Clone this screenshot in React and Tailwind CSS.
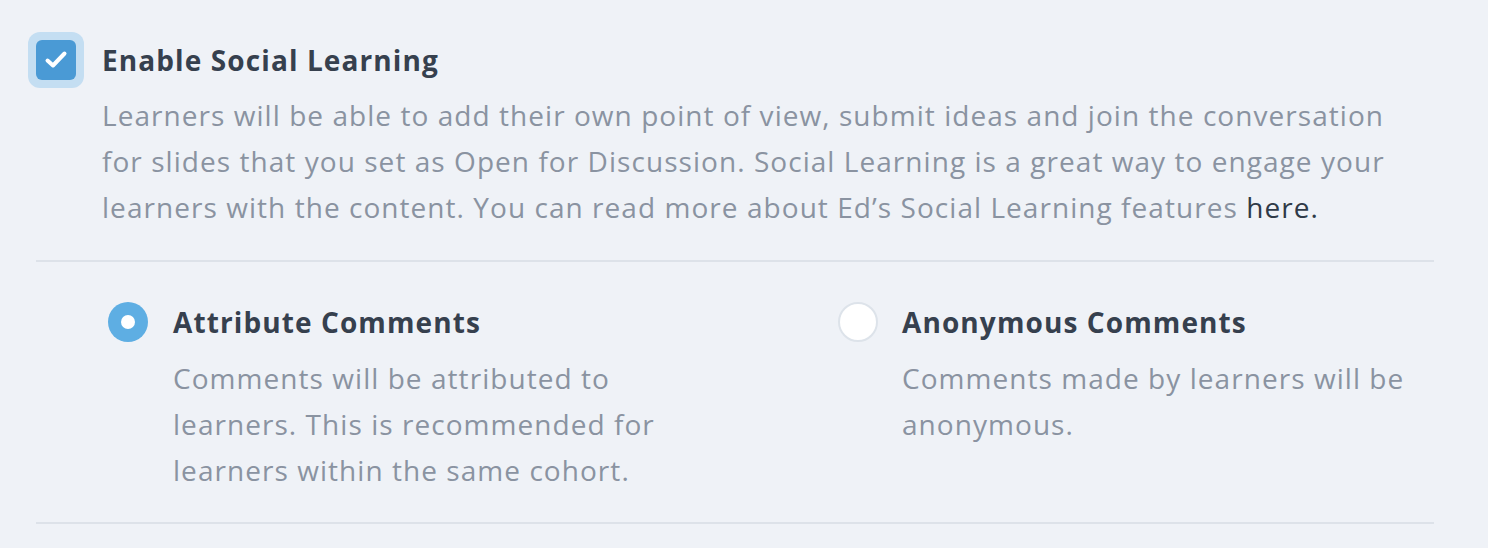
export default function App() {
  const font = { fontFamily: "'Open Sans', Lato, sans-serif" };
  return (
    <div className="w-[1488px] h-[548px] bg-[#eff2f7] overflow-hidden" style={font}>
      <div className="flex pt-[32px] pl-[28px]">
        <div className="w-[56px] h-[56px] rounded-[12px] bg-[#c4def2] flex items-center justify-center shrink-0">
          <div className="w-[40px] h-[40px] rounded-[6px] bg-[#4a9ad5] flex items-center justify-center">
            <svg width="24" height="20" viewBox="0 0 24 20" fill="none" className="shrink-0">
              <path d="M3.5 10.5 L9 15.5 L20.5 3.5" stroke="white" strokeWidth="4" strokeLinecap="round" strokeLinejoin="round" />
            </svg>
          </div>
        </div>
        <div className="ml-[18px]">
          <div className="text-[28px] leading-[56px] font-bold text-[#36404e] tracking-[1.1px]">Enable Social Learning</div>
          <p className="text-[28px] leading-[46px] text-[#8a93a1] mt-[4px] tracking-[1.05px]">
            Learners will be able to add their own point of view, submit ideas and join the conversation<br />
            for slides that you set as Open for Discussion. Social Learning is a great way to engage your<br />
            learners with the content. You can read more about Ed’s Social Learning features <span className="text-[#2f3a48]">here.</span>
          </p>
        </div>
      </div>
      <div className="mx-[36px] w-[1398px] mt-[30px] h-[2px] bg-[#dde2e9]" />
      <div className="flex pl-[108px] pt-[40px]">
        <div className="flex w-[730px]">
          <div className="w-[40px] h-[40px] rounded-full bg-[#5eaee3] flex items-center justify-center shrink-0">
            <div className="w-[14px] h-[14px] rounded-full bg-white" />
          </div>
          <div className="ml-[25px] mt-[-2px]">
            <div className="text-[28px] leading-[44px] font-bold text-[#36404e] tracking-[1.1px]">Attribute Comments</div>
            <p className="text-[28px] leading-[46px] text-[#8a93a1] mt-[11px] tracking-[1.05px]">
              Comments will be attributed to<br />
              learners. This is recommended for<br />
              learners within the same cohort.
            </p>
          </div>
        </div>
        <div className="flex">
          <div className="w-[40px] h-[40px] rounded-full bg-white border-2 border-[#dde3ea] shrink-0" />
          <div className="ml-[24px] mt-[-2px]">
            <div className="text-[28px] leading-[44px] font-bold text-[#36404e] tracking-[1.1px]">Anonymous Comments</div>
            <p className="text-[28px] leading-[46px] text-[#8a93a1] mt-[11px] tracking-[1.05px]">
              Comments made by learners will be<br />
              anonymous.
            </p>
          </div>
        </div>
      </div>
      <div className="mx-[36px] w-[1398px] mt-[29px] h-[2px] bg-[#dde2e9]" />
    </div>
  );
}
